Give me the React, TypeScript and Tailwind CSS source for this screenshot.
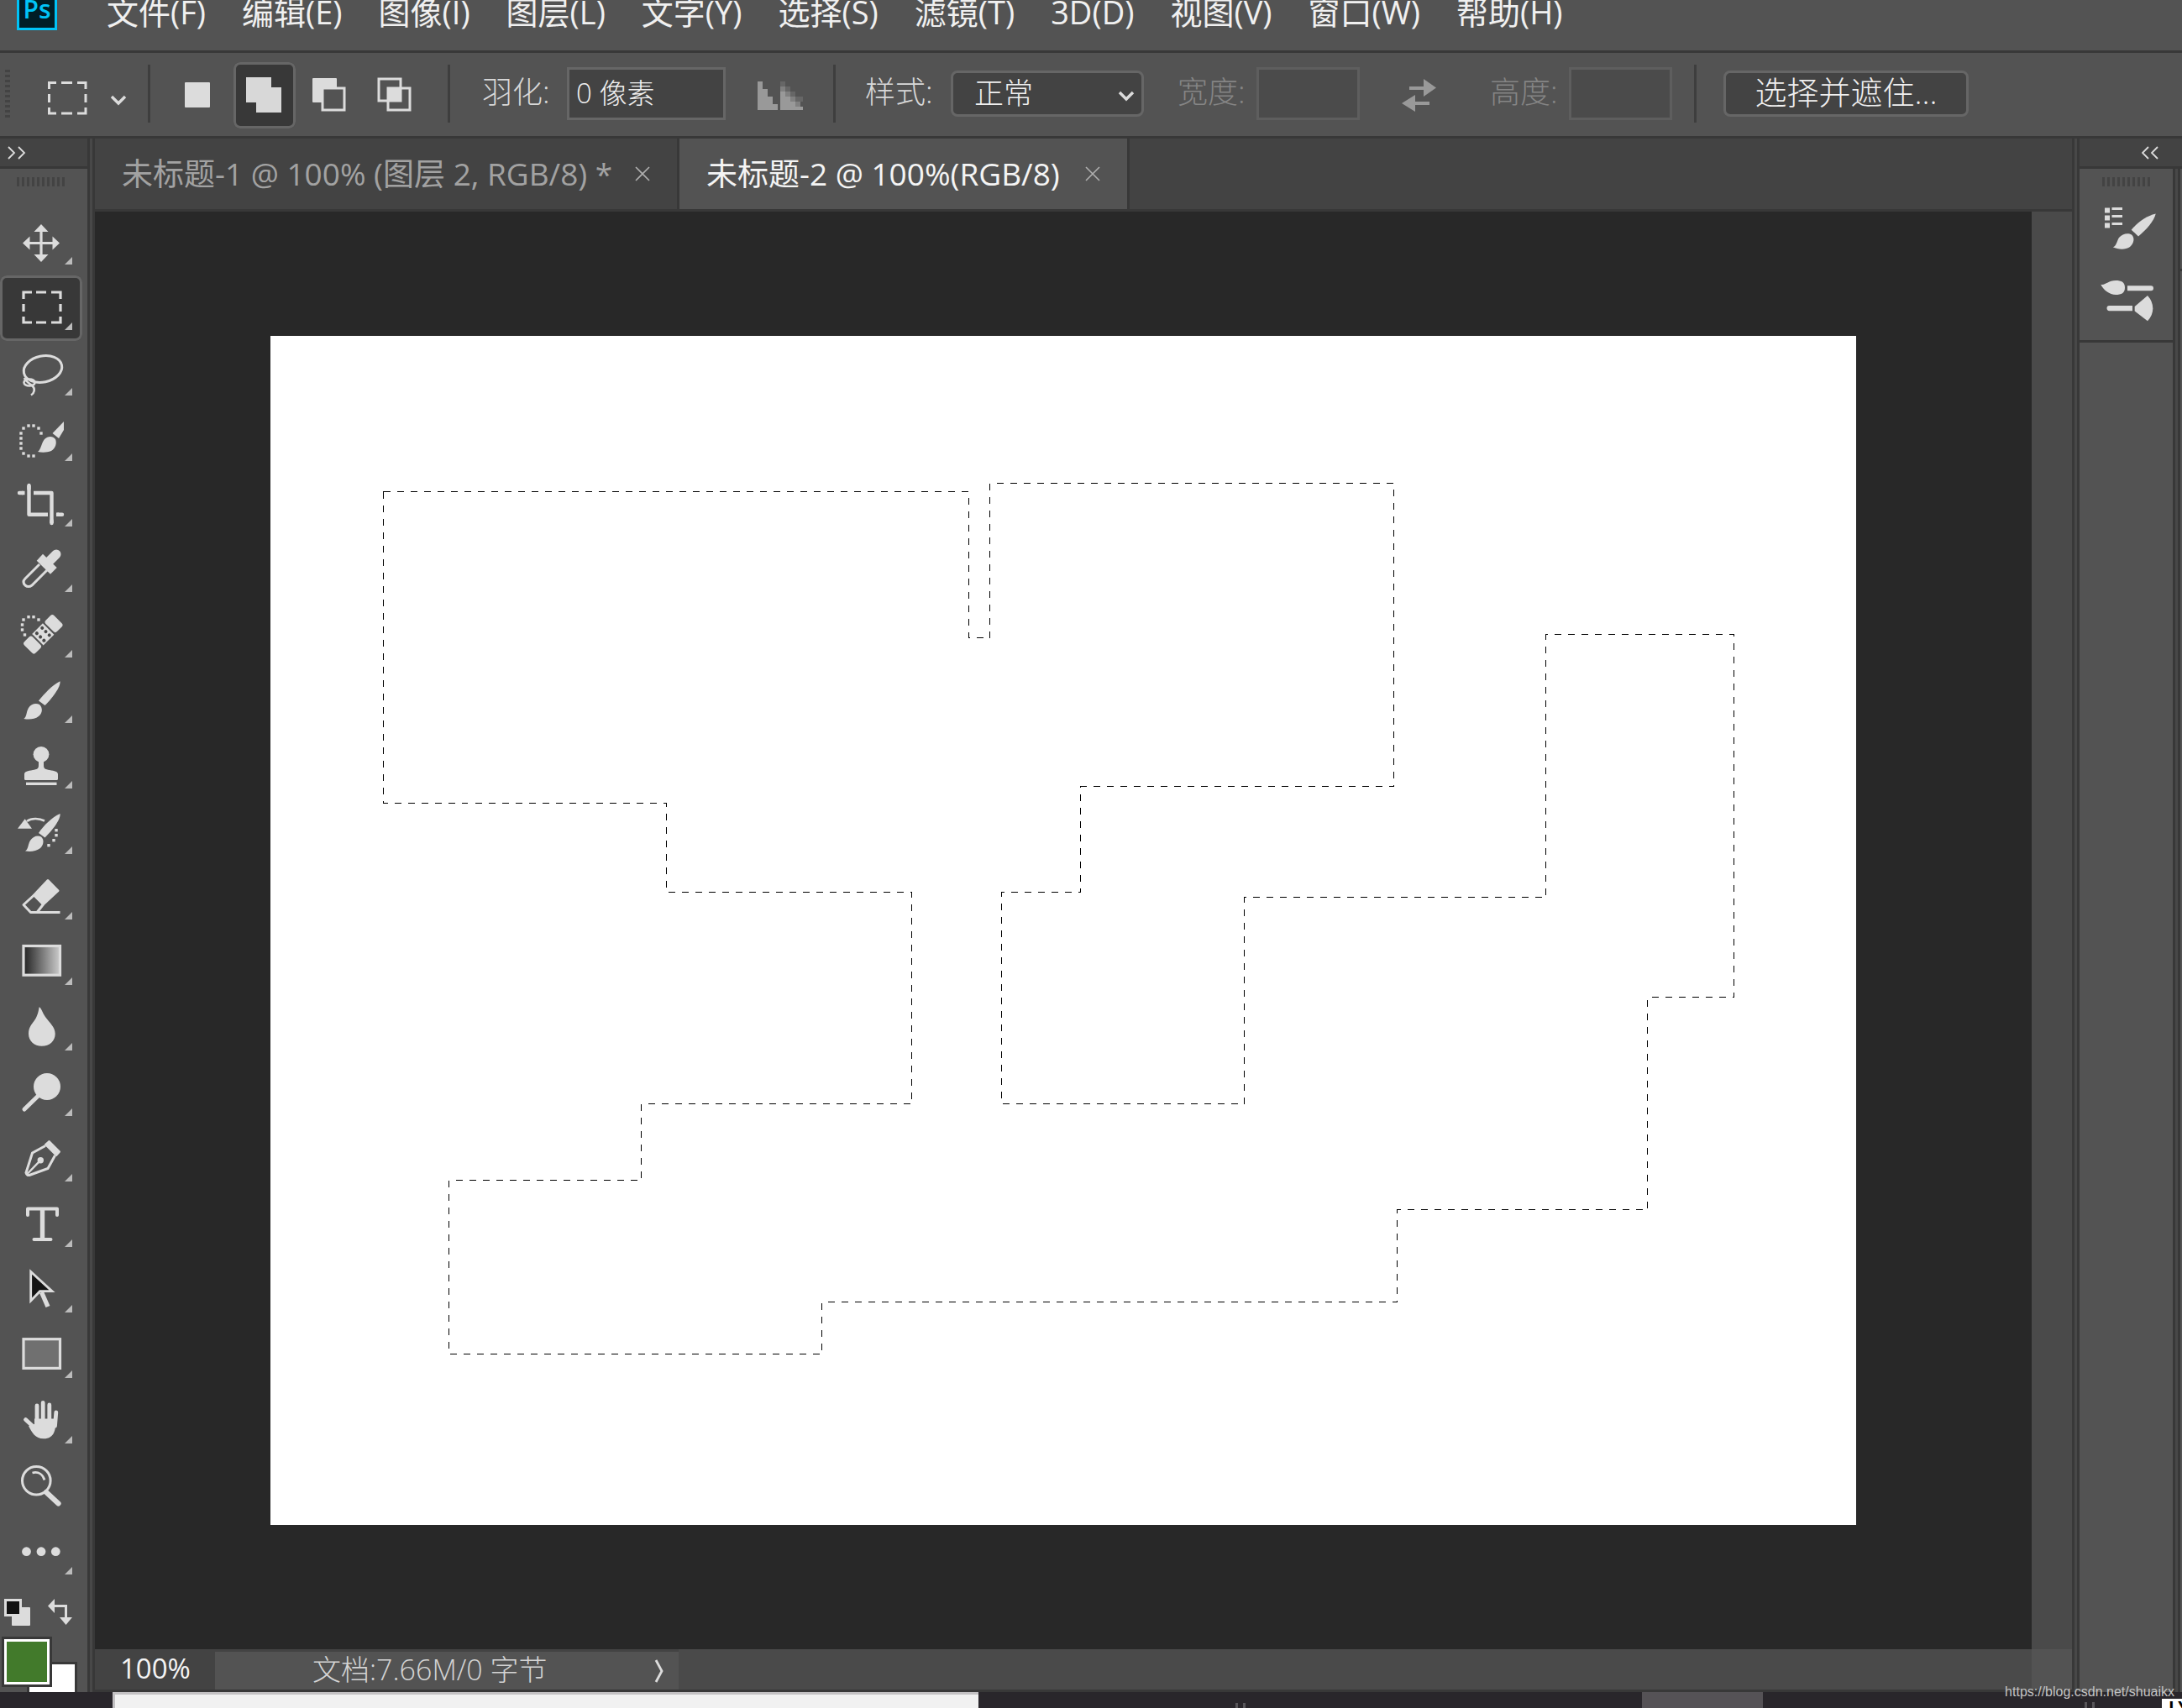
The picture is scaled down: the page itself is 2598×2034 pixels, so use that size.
import React from 'react';

const INK = '#dcdcdc';

const menus = [
  '文件(F)', '编辑(E)', '图像(I)', '图层(L)', '文字(Y)', '选择(S)',
  '滤镜(T)', '3D(D)', '视图(V)', '窗口(W)', '帮助(H)'
];

const Dots = ({ at }: { at: number[][] }) => (
  <>
    {at.map(([x, y]) => (
      <rect key={`${x}-${y}`} x={x - 1.7} y={y - 1.7} width="3.4" height="3.4" fill={INK} />
    ))}
  </>
);

// every tool glyph is drawn in a 98 x 78 cell
const tools: { name: string; icon: React.ReactNode; single?: boolean }[] = [
  {
    name: '移动工具',
    icon: (
      <g fill={INK}>
        <path d="M35 39.5H63M49 25V54" stroke={INK} strokeWidth="3.2" />
        <path d="M49 17l8.5 9h-17zM49 62l8.5-9h-17zM27 39.5l8.5-8v16zM71 39.5l-8.5-8v16z" />
      </g>
    )
  },
  {
    name: '矩形选框工具',
    icon: (
      <path
        d="M28 28V20H38M43 20H55M61 20H72V28M72 34V43M72 49V56H61M55 56H43M38 56H28V49M28 43V34"
        fill="none" stroke={INK} strokeWidth="3.2"
      />
    )
  },
  {
    name: '套索工具',
    icon: (
      <g fill="none" stroke={INK} strokeWidth="3">
        <ellipse cx="51" cy="33.5" rx="23" ry="15.5" transform="rotate(-12 51 33.5)" />
        <ellipse cx="35" cy="49.5" rx="6.5" ry="4" strokeWidth="2.6" />
        <path d="M29 44C31 49 36 51 39 54C42 57 41 62 37 64.5" strokeWidth="2.6" />
      </g>
    )
  },
  {
    name: '快速选择工具',
    icon: (
      <g fill={INK}>
        <Dots at={[[25, 32], [25, 38], [25, 44], [25, 50], [28, 26], [34, 23], [40, 23], [46, 26], [49, 32], [28, 56], [34, 59], [40, 59]]} />
        <path d="M45 54C49 51 49 44 53 39C57 35 63 35 66 39C68 44 66 50 61 53C56 55 50 55 45 54Z" />
        <path d="M62.5 32L76 18V28L70 38Z" />
      </g>
    )
  },
  {
    name: '裁剪工具',
    icon: (
      <g fill="none" stroke={INK} strokeWidth="4.4" strokeLinejoin="round">
        <path d="M34.5 16V50.7H57M40 25H61.5V61" />
        <path d="M34.5 16V20M61.5 58V61M23 25H27M69 50.7H74" strokeLinecap="round" />
        <path d="M26 25H29.5M67 50.7H70" />
      </g>
    )
  },
  {
    name: '吸管工具',
    icon: (
      <g fill={INK}>
        <path d="M57 30L67 20" stroke={INK} strokeWidth="11" strokeLinecap="round" />
        <path d="M51 19.7L67.7 36L60 43.7L43.7 27.7Z" strokeLinejoin="round" />
        <path d="M47 32L30 49C27 52 28 55 30 57C33 59.5 36 58.5 38 57L56 39" fill="none" stroke={INK} strokeWidth="3" />
      </g>
    )
  },
  {
    name: '污点修复画笔工具',
    icon: (
      <g>
        <Dots at={[[26.5, 26], [26.5, 32], [29.5, 38], [28, 20], [34, 16.7], [40, 16.7], [46, 20]]} />
        <g transform="translate(51.3 37.3) rotate(-45)" fill={INK}>
          <rect x="-25" y="-9.5" width="14" height="19" rx="3" />
          <rect x="11" y="-9.5" width="14" height="19" rx="3" />
          <rect x="-9" y="-9.5" width="18" height="19" />
          <g fill="#484848">
            <circle cx="4.5" cy="-6" r="2" />
            <circle cx="4.5" cy="0" r="2" />
            <circle cx="4.5" cy="6" r="2" />
            <circle cx="-4.5" cy="-6" r="2" />
            <circle cx="-4.5" cy="0" r="2" />
            <circle cx="-4.5" cy="6" r="2" />
          </g>
        </g>
      </g>
    )
  },
  {
    name: '画笔工具',
    icon: (
      <g fill={INK}>
        <path d="M46 38.5C53 30 61 21 71.5 15.3C72.5 22 62 36 53.5 44Z" />
        <path d="M28.3 60C32 58 31 52 34 47C37 42 43 41 47 43C51 47 51 53 46 57C41 61 34 61 28.3 60Z" />
      </g>
    )
  },
  {
    name: '仿制图章工具',
    icon: (
      <g fill={INK}>
        <circle cx="49" cy="24.3" r="9.4" />
        <path d="M46 31H52V37C52 42 54 42 59 43C65 44 69 45 69 48V53.5Q69 55 67.5 55H30.5Q29 55 29 53.5V48C29 45 33 44 39 43C44 42 46 42 46 37Z" />
        <rect x="31" y="57.7" width="36.5" height="3.3" />
      </g>
    )
  },
  {
    name: '历史记录画笔工具',
    icon: (
      <g fill={INK}>
        <path d="M21 34.7L29.7 23.3L38 34.7Z" />
        <path d="M32 26C38 21.5 47 22.5 53 25.5" fill="none" stroke={INK} strokeWidth="2.6" />
        <path d="M46 40C52 31 62 21 71.5 17C72.5 24 62 37 53.5 45.5Z" />
        <path d="M30 61.5C34 59 33 54 36 49C39 44 45 42 49 44.5C53 48 52 54 48 58C43 62 36 62.5 30 61.5Z" />
        <Dots at={[[67, 36.7], [67, 42.7], [64, 48.7], [58, 54.7]]} />
      </g>
    )
  },
  {
    name: '橡皮擦工具',
    icon: (
      <g fill="none" stroke={INK} strokeWidth="3" strokeLinejoin="round">
        <path d="M57 18.5L69 30.7L51.5 47L40.5 36Z" fill={INK} />
        <path d="M40.5 36L28 47.5L36.5 56.5H71.5M51.5 47L44.5 56" />
      </g>
    )
  },
  {
    name: '渐变工具',
    icon: (
      <g>
        <defs>
          <linearGradient id="ramp">
            <stop offset="0" stopColor="#222" />
            <stop offset="1" stopColor="#ccc" />
          </linearGradient>
        </defs>
        <rect x="28" y="18.5" width="43.5" height="34.7" fill="url(#ramp)" stroke={INK} strokeWidth="3.2" />
      </g>
    )
  },
  {
    name: '模糊工具',
    icon: <path d="M46.7 13.3C49 14 50 19 54 25C59 32 65.7 37 65.7 45C65.7 54 59 59.7 49.7 59.7C41 59.7 34 54 34 45C34 36 39 33 43 26C46 20 46 16 46.7 13.3Z" fill={INK} />
  },
  {
    name: '减淡工具',
    icon: (
      <g>
        <circle cx="56" cy="30" r="16" fill={INK} />
        <path d="M47 39.5L29 57" stroke={INK} strokeWidth="5" strokeLinecap="round" />
      </g>
    )
  },
  {
    name: '钢笔工具',
    icon: (
      <g>
        <path d="M54 22.5L38.5 31L31 54.5Q32 58 35 57.5L57 49.5L65.5 34" fill="none" stroke={INK} strokeWidth="3" />
        <path d="M58.5 17L71 29.5L67 34L54 21Z" fill={INK} stroke={INK} strokeWidth="2" strokeLinejoin="round" />
        <circle cx="48.3" cy="39.7" r="3.7" fill={INK} />
        <path d="M48.3 39.7L32 56.5" stroke={INK} strokeWidth="2.4" />
      </g>
    )
  },
  {
    name: '横排文字工具',
    icon: (
      <g fill="none" stroke={INK} strokeWidth="4" strokeLinecap="round" strokeLinejoin="round">
        <path d="M33 27V19.5H68V27M40.5 56H60.5" />
        <path d="M50.5 20V56" strokeWidth="5.4" strokeLinecap="butt" />
      </g>
    )
  },
  {
    name: '路径选择工具',
    icon: (
      <g stroke={INK}>
        <path d="M49.5 41L57 58" strokeWidth="5.4" strokeLinecap="butt" />
        <path d="M36.7 16.5V51L47.5 39.7H62Z" fill="#141414" strokeWidth="2.8" />
      </g>
    )
  },
  {
    name: '矩形工具',
    icon: <rect x="28" y="18.7" width="43.5" height="34.7" fill="#707070" stroke={INK} strokeWidth="3.2" />
  },
  {
    name: '抓手工具',
    icon: (
      <g fill="none" stroke={INK} strokeWidth="4.8" strokeLinecap="round">
        <path d="M44 20V42M51.2 16.5V42M58.8 19V42M66.8 28L65.5 44M30.5 36.5L43 48" />
        <path d="M41 35.5H66C67 48 65 59.3 52 59.3C42 59.3 38 52 34 44L41 42Z" fill={INK} stroke="none" />
      </g>
    )
  },
  {
    name: '缩放工具',
    single: true,
    icon: (
      <g fill="none" stroke={INK}>
        <circle cx="43.3" cy="31.3" r="16.8" strokeWidth="3" />
        <path d="M55 45L69.5 58.5" strokeWidth="6.2" strokeLinecap="round" />
        <path d="M38.5 22C46 20 51 24 53 30.5" strokeWidth="2.8" />
      </g>
    )
  },
  {
    name: '编辑工具栏',
    icon: (
      <g fill={INK}>
        <circle cx="31.5" cy="37.7" r="5.4" />
        <circle cx="49" cy="37.7" r="5.4" />
        <circle cx="66.3" cy="37.7" r="5.4" />
      </g>
    )
  }
];

const modes = [
  {
    name: '新选区',
    icon: <rect x="20" y="24" width="30" height="30" rx="1" fill={INK} />
  },
  {
    name: '添加到选区',
    active: true,
    icon: <path d="M15 18H45V30H57V60H27V48H15Z" fill="#d8d8d8" />
  },
  {
    name: '从选区减去',
    icon: (
      <g>
        <rect x="16" y="19" width="29" height="29" rx="1" fill={INK} />
        <rect x="28" y="31" width="26" height="26" fill="#535353" stroke={INK} strokeWidth="3" />
      </g>
    )
  },
  {
    name: '与选区交叉',
    icon: (
      <g fill="none" stroke={INK} strokeWidth="3">
        <rect x="17" y="20" width="26" height="26" />
        <rect x="28" y="31" width="26" height="26" />
        <rect x="27" y="30" width="17" height="17" fill={INK} stroke="none" />
      </g>
    )
  }
];

const Grip = () => (
  <div className="flex h-[11px] gap-[3px]">
    {Array.from({ length: 10 }, (_, i) => (
      <span key={i} className="w-[3px] bg-[#434343]" />
    ))}
  </div>
);

const Divider = () => <div className="h-[69px] w-[3px] shrink-0 bg-[#3e3e3e]" />;

const Gutter = () => (
  <div className="w-[9px] shrink-0 border-x-[3px] border-[#383838] bg-[#484848]" />
);

const CloseIcon = () => (
  <svg width="18" height="18" viewBox="0 0 18 18">
    <path d="M1 1L17 17M17 1L1 17" stroke="#b0b0b0" strokeWidth="1.6" />
  </svg>
);

const MenuBar = () => (
  <header className="flex h-[63px] shrink-0 items-start border-b-[3px] border-[#383838]">
    <div className="ml-[20px] flex h-[36px] w-[48px] items-end justify-center border-[3px] border-t-0 border-[#00c3f7] bg-[#001d26] font-['Open_Sans',sans-serif] text-[30px] font-semibold leading-[44px] text-[#00c3f7]">
      Ps
    </div>
    <nav className="ml-[59px] flex gap-[43px]">
      {menus.map((m) => (
        <button key={m} className="whitespace-nowrap text-[38px] leading-[28px] text-[#f0f0f0]">{m}</button>
      ))}
    </nav>
  </header>
);

const OptionsBar = () => (
  <div className="flex h-[99px] shrink-0 items-center pb-[2px] text-[36px] font-light leading-[48px] text-[#d8d8d8]">
    <div className="ml-[6px] flex w-[6px] flex-col gap-[3px]">
      {Array.from({ length: 10 }, (_, i) => (
        <span key={i} className="h-[3px] bg-[#434343]" />
      ))}
    </div>
    <button aria-label="工具预设" className="ml-[44px] pt-[8px]">
      <svg width="96" height="42" viewBox="0 0 96 42" fill="none" stroke={INK} strokeWidth="3">
        <path d="M2.5 11V3.5H11M17 3.5H30M36 3.5H46V11M46 17V27M46 33V40H36M30 40H17M11 40H2.5V33M2.5 27V17" />
        <path d="M77 20L85 28L93 20" strokeWidth="3.4" />
      </svg>
    </button>
    <div className="ml-[24px]"><Divider /></div>
    <div className="ml-[21px] flex gap-1 pt-[4px]">
      {modes.map((m) => (
        <button
          key={m.name}
          aria-label={m.name}
          aria-pressed={!!m.active}
          className={`h-[79px] w-[74px] rounded-lg ${m.active ? 'bg-[#383838] ring-3 ring-inset ring-[#666]' : ''}`}
        >
          <svg width="74" height="79" viewBox="0 0 74 79">{m.icon}</svg>
        </button>
      ))}
    </div>
    <div className="ml-[25px]"><Divider /></div>
    <label htmlFor="feather" className="ml-[38px] w-[101px] whitespace-nowrap pb-[4px]">羽化:</label>
    <input id="feather" defaultValue="0 像素" className="h-[63px] w-[189px] border-[3px] border-[#666] bg-[#434343] px-2 pb-[6px] text-[33px] text-[#f0f0f0]" />
    <button aria-label="消除锯齿" className="ml-[38px] pt-[4px]">
      <svg width="54" height="34" viewBox="0 0 54 34" fill="#999">
        <path d="M0 0H6V9H12V18H18V27H24V34H0Z" />
        <path d="M27 12H33V18H39V24H45V30H54V34H27Z" />
        <path d="M27 6H33V12H27ZM33 12H39V18H33ZM39 18H45V24H39ZM45 24H51V30H45Z" fill="#808080" />
        <path d="M27 0H33V6H27ZM33 6H39V12H33ZM39 12H45V18H39ZM45 18H54V24H45Z" fill="#666" />
      </svg>
    </button>
    <div className="ml-[36px]"><Divider /></div>
    <label htmlFor="style" className="ml-[35px] w-[102px] whitespace-nowrap pb-[4px]">样式:</label>
    <div className="relative">
      <select id="style" className="block h-[55px] w-[230px] appearance-none rounded-lg border-[3px] border-[#666] bg-[#434343] pb-[4px] pl-[25px] text-[35px] text-[#f0f0f0]">
        <option>正常</option>
      </select>
      <svg className="pointer-events-none absolute right-[11px] top-[24px]" width="20" height="14" viewBox="0 0 20 14">
        <path d="M2 2L10 10L18 2" fill="none" stroke={INK} strokeWidth="3.4" />
      </svg>
    </div>
    <label htmlFor="width" className="ml-[40px] w-[94px] whitespace-nowrap pb-[4px] text-[#858585]">宽度:</label>
    <input id="width" disabled className="h-[63px] w-[123px] border-[3px] border-[#5e5e5e] bg-[#4b4b4b]" />
    <button aria-label="高度和宽度互换" className="ml-[50px] pt-[4px]">
      <svg width="42" height="40" viewBox="0 0 42 40" fill="#999">
        <path d="M9 9H26V0L41 10.5L26 21V13H9ZM33 27H16V19L0 29L16 39V31H33Z" />
      </svg>
    </button>
    <label htmlFor="height" className="ml-[63px] w-[94px] whitespace-nowrap pb-[4px] text-[#858585]">高度:</label>
    <input id="height" disabled className="h-[63px] w-[123px] border-[3px] border-[#5e5e5e] bg-[#4b4b4b]" />
    <div className="ml-[26px]"><Divider /></div>
    <button className="ml-[32px] h-[55px] w-[292px] whitespace-nowrap rounded-lg border-[3px] border-[#666] bg-[#434343] pb-[4px] text-[38px] leading-[45px] text-[#f0f0f0]">
      选择并遮住...
    </button>
  </div>
);

const Toolbox = () => (
  <aside className="flex w-[104px] shrink-0 flex-col">
    <button aria-label="展开面板" className="flex h-[36px] items-center border-b-[3px] border-[#383838] bg-[#434343] pl-[9px]">
      <svg width="22" height="16" viewBox="0 0 22 16" fill="none" stroke={INK} strokeWidth="1.8">
        <path d="M1 1L8 8L1 15M13 1L20 8L13 15" />
      </svg>
    </button>
    <div className="h-[49px] pl-[20px] pt-[10px]"><Grip /></div>
    {tools.map((t, i) => (
      <button
        key={t.name}
        aria-label={t.name}
        className={`h-[78px] w-[98px] rounded-lg ${i === 1 ? 'bg-[#383838] ring-3 ring-inset ring-[#666]' : ''}`}
      >
        <svg width="98" height="78" viewBox="0 0 98 78">
          {t.icon}
          {!t.single && <path d="M77 65H86V56Z" fill="#bcbcbc" />}
        </svg>
      </button>
    ))}
    <div className="flex h-[61px] items-start gap-5 pl-[5px] pt-[16px]">
      <button aria-label="默认前景色和背景色">
        <svg width="32" height="32" viewBox="0 0 32 32">
          <rect x="9" y="10" width="22" height="22" rx="1" fill={INK} />
          <rect x="1.5" y="1.5" width="18" height="18" fill="#111" stroke={INK} strokeWidth="3" />
        </svg>
      </button>
      <button aria-label="切换前景色和背景色">
        <svg width="30" height="32" viewBox="0 0 30 32" fill={INK}>
          <path d="M6 8.5H21.5V24" fill="none" stroke={INK} strokeWidth="3" />
          <path d="M0 8.5L8 0V17ZM21.5 31L14 22H29Z" />
        </svg>
      </button>
    </div>
    <div className="relative min-h-[66px] flex-1 overflow-hidden">
      <button aria-label="背景色" className="absolute left-[32px] top-[30px] size-[60px] border-[3px] border-[#383838] bg-white" />
      <button aria-label="前景色" className="absolute left-[2px] top-0 size-[60px] border-[3px] border-[#383838] bg-white p-[3px]">
        <span className="block size-full bg-[#427a2b]" />
      </button>
    </div>
  </aside>
);

const Tabs = () => (
  <div role="tablist" className="flex h-[87px] shrink-0 border-b-[3px] border-[#383838] bg-[#434343] text-[37px] leading-[52px]">
    <div className="flex w-[696px] items-center justify-between border-r-[3px] border-[#383838] pl-[32px] pr-[32px] text-[#a2a2a2]">
      <button role="tab" className="whitespace-nowrap">未标题-1 @ 100% (图层 2, RGB/8) *</button>
      <button aria-label="关闭"><CloseIcon /></button>
    </div>
    <div className="flex w-[536px] items-center justify-between border-r-[3px] border-[#383838] bg-[#535353] pl-[32px] pr-[32px] text-[#f4f4f4]">
      <button role="tab" aria-selected className="whitespace-nowrap">未标题-2 @ 100%(RGB/8)</button>
      <button aria-label="关闭"><CloseIcon /></button>
    </div>
  </div>
);

// marching-ants outline, in document pixels
const SELECTION =
  'M134.5 185.5H831.5V359.5H856.5V175.5H1337.5V536.5H964.5V662.5H870.5V914.5H1159.5V668.5' +
  'H1518.5V355.5H1742.5V787.5H1639.5V1040.5H1341.5V1150.5H656.5V1212.5H212.5V1005.5' +
  'H441.5V914.5H763.5V662.5H471.5V556.5H134.5Z';

const Workspace = () => (
  <main className="flex min-w-0 flex-1 flex-col">
    <Tabs />
    <div className="flex flex-1">
      <div className="flex flex-1 items-center justify-center bg-[#282828]">
        <svg className="bg-white" width="1888" height="1416" viewBox="0 0 1888 1416">
          <path d={SELECTION} fill="none" stroke="#000" strokeDasharray="8 8" shapeRendering="crispEdges" />
        </svg>
      </div>
      <div className="w-[48px] shrink-0 bg-[#4a4a4a]" />
    </div>
    <div className="flex h-[51px] shrink-0 border-b-[3px] border-[#383838] bg-[#4a4a4a] text-[33px] leading-[44px]">
      <input aria-label="缩放比例" defaultValue="100%" className="w-[143px] bg-[#434343] pb-[2px] pl-[30px] text-[#f4f4f4]" />
      <div className="flex w-[552px] items-center border-t-[3px] border-[#434343] bg-[#535353] pl-[116px] text-[#d4d4d4]">
        <span className="flex-1 whitespace-nowrap pb-[4px] text-[34px] font-light">文档:7.66M/0 字节</span>
        <button aria-label="状态栏选项" className="pr-[17px]">
          <svg width="12" height="28" viewBox="0 0 12 28">
            <path d="M2 1L9 14L2 27" fill="none" stroke={INK} strokeWidth="2.8" />
          </svg>
        </button>
      </div>
      <div className="flex-1" />
      <div className="w-[48px] bg-[#535353]" />
    </div>
  </main>
);

const Dock = () => (
  <aside className="flex w-[122px] shrink-0 flex-col">
    <button aria-label="折叠面板" className="flex h-[36px] items-center justify-end border-b-[3px] border-[#383838] bg-[#434343] pr-[28px]">
      <svg width="20" height="16" viewBox="0 0 20 16" fill="none" stroke={INK} strokeWidth="1.8">
        <path d="M8 1L1 8L8 15M19 1L12 8L19 15" />
      </svg>
    </button>
    <div className="flex flex-1">
      <div className="w-[111px]">
        <div className="border-b-[3px] border-[#383838]">
          <div className="h-[29px] pl-[27px] pt-[10px]"><Grip /></div>
          <button aria-label="画笔设置" className="block">
            <svg width="111" height="88" viewBox="0 0 111 88" fill={INK}>
              <path d="M30 17.5h6v6h-6zM30 26.5h6v6h-6zM30 35.5h6v6h-6zM38.5 17h12.5v3h-12.5zM38.5 26h12.5v3h-12.5zM38.5 35h12.5v3h-12.5z" />
              <path d="M61.7 43.7C70 34 80 27 90.7 24.5C89 33 79 44 70 51.5Z" />
              <path d="M39.7 64.3C44 63 44 58 47 53C51 48 58 47 62 49.5C66 53 65 60 60 64C54 68 46 67 39.7 64.3Z" />
            </svg>
          </button>
          <button aria-label="画笔" className="block">
            <svg width="111" height="87" viewBox="0 0 111 87" fill={INK}>
              <path d="M25.3 20.7C31 22 34 16 43 16C50 16 54 18 54 24.5C54 31 50 33 43 33C36 33 28 27 25.3 20.7Z" />
              <path d="M57 22.3H85Q88 22.3 88 25.3T85 28.3H57Z" />
              <path d="M63 46H35.5Q32.5 46 32.5 49T35.5 52.3H63Z" />
              <path d="M65.7 47L81 34Q87.3 41 87.3 49.3T81 64.3L65.7 52.5Z" />
            </svg>
          </button>
        </div>
      </div>
      <Gutter />
      <div className="flex-1">
        <div className="h-[122px] border-b-[3px] border-[#383838]" />
      </div>
    </div>
  </aside>
);

const Taskbar = () => (
  <footer className="flex h-[19px] shrink-0 overflow-hidden bg-[#29262b]">
    <div className="ml-[134px] w-[1031px] border-l-[3px] border-t-[3px] border-[#c3c1c3] bg-[#f1f1f1]" />
    <div className="ml-[306px] mt-[13px] h-[6px] w-[12px] border-x-[3px] border-[#58565a]" />
    <div className="ml-[472px] w-[144px] bg-[#555256]" />
    <div className="ml-[383px] mt-[12px] h-[7px] w-[12px] border-x-[3px] border-[#58565a]" />
    <div className="ml-auto mt-[8px] w-[24px] overflow-hidden whitespace-nowrap bg-white pl-2 text-[20px] font-bold leading-[20px] text-black">
      LY
    </div>
  </footer>
);

const App: React.FC = () => {
  return (
    <div className="relative flex min-h-screen flex-col overflow-hidden bg-[#535353] font-['Open_Sans','Noto_Sans_CJK_SC',sans-serif]">
      <MenuBar />
      <OptionsBar />
      <div className="flex flex-1 border-t-[3px] border-[#383838] bg-[#535353]">
        <Toolbox />
        <Gutter />
        <Workspace />
        <Gutter />
        <Dock />
      </div>
      <Taskbar />
      <a
        href="https://blog.csdn.net/shuaikx"
        className="absolute bottom-[9px] right-[9px] font-['Liberation_Sans',sans-serif] text-[16px] leading-[20px] text-[#c4c4c4]"
      >
        https://blog.csdn.net/shuaikx
      </a>
    </div>
  );
};

export default App;
